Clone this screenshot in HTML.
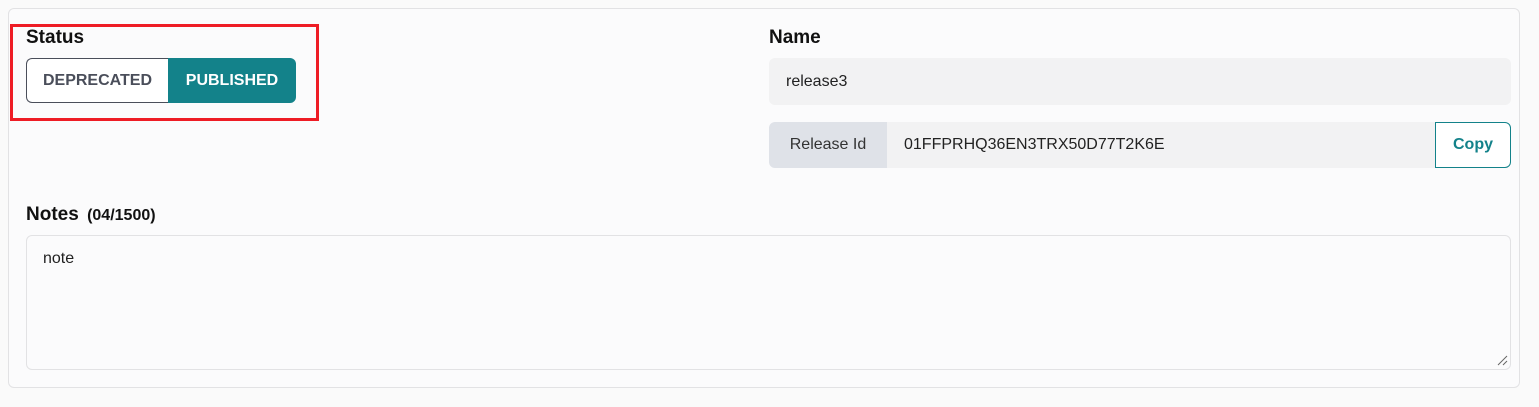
<!DOCTYPE html>
<html><head><style>
body{margin:0;width:1539px;height:407px;background:#fafafa;font-family:"Liberation Sans",sans-serif;position:relative;overflow:hidden}
.card{position:absolute;left:8px;top:8px;width:1510px;height:378px;border:1px solid #e2e2e4;border-radius:6px;background:#fbfbfc}
.a{position:absolute}
.lbl{font-size:19px;font-weight:bold;color:#111}
</style></head><body>
<div class="card"></div>
<div class="a lbl" style="left:26px;top:27px">Status</div>
<div class="a" style="left:26px;top:58px;width:142px;height:45px;border:1px solid #4a4e5a;border-right:none;border-radius:6px 0 0 6px;box-sizing:border-box;font-size:16px;font-weight:bold;color:#4a4e5a;text-align:center;line-height:43px;background:#fff">DEPRECATED</div>
<div class="a" style="left:168px;top:58px;width:128px;height:45px;background:#13828a;border-radius:0 6px 6px 0;color:#fff;font-size:16px;font-weight:bold;text-align:center;line-height:45px">PUBLISHED</div>
<div class="a" style="left:10px;top:24px;width:309px;height:97px;border:3px solid #ee1c25;box-sizing:border-box"></div>
<div class="a lbl" style="left:769px;top:27px">Name</div>
<div class="a" style="left:769px;top:58px;width:742px;height:47px;background:#f2f2f3;border-radius:6px;font-size:16px;line-height:47px;padding-left:17px;box-sizing:border-box;color:#222">release3</div>
<div class="a" style="left:769px;top:122px;width:118px;height:46px;background:#dfe2e8;border-radius:6px 0 0 6px;font-size:16px;line-height:46px;text-align:center;color:#333">Release Id</div>
<div class="a" style="left:887px;top:122px;width:548px;height:46px;background:#f2f2f3;font-size:16px;line-height:46px;padding-left:17px;box-sizing:border-box;color:#222">01FFPRHQ36EN3TRX50D77T2K6E</div>
<div class="a" style="left:1435px;top:122px;width:76px;height:46px;border:1px solid #13828a;border-radius:0 6px 6px 0;box-sizing:border-box;color:#13828a;font-weight:bold;font-size:16px;text-align:center;line-height:44px;background:#fff">Copy</div>
<div class="a lbl" style="left:26px;top:204px">Notes <span style="font-size:16px;margin-left:3px">(04/1500)</span></div>
<div class="a" style="left:26px;top:235px;width:1485px;height:135px;border:1px solid #e2e2e4;border-radius:6px;box-sizing:border-box;background:#fbfbfc;font-size:16px;color:#222;padding:14px 16px">note</div>
<svg class="a" style="left:1496px;top:354px" width="12" height="12"><path d="M2 11L11 2M7 11L11 7" stroke="#666" stroke-width="1"/></svg>
</body></html>
